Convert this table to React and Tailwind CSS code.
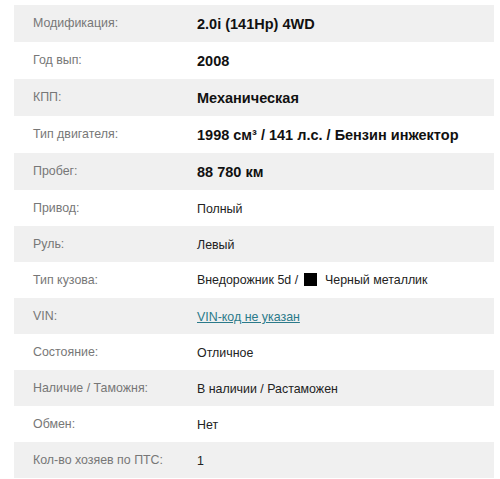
import React from "react";

const rows = [
  { label: "Модификация:", value: "2.0i (141Hp) 4WD", bold: true },
  { label: "Год вып:", value: "2008", bold: true },
  { label: "КПП:", value: "Механическая", bold: true },
  { label: "Тип двигателя:", value: "1998 см³ / 141 л.с. / Бензин инжектор", bold: true },
  { label: "Пробег:", value: "88 780 км", bold: true },
  { label: "Привод:", value: "Полный" },
  { label: "Руль:", value: "Левый" },
  { label: "Тип кузова:", value: "body" },
  { label: "VIN:", value: "vin" },
  { label: "Состояние:", value: "Отличное" },
  { label: "Наличие / Таможня:", value: "В наличии / Растаможен" },
  { label: "Обмен:", value: "Нет" },
  { label: "Кол-во хозяев по ПТС:", value: "1" },
];

export default function App() {
  return (
    <div className="w-[500px] h-[479px] bg-white pt-[5px] pl-[14px] overflow-hidden" style={{ fontFamily: '"Liberation Sans", Arial, sans-serif' }}>
      <div className="w-[480px] flex flex-col">
        {rows.map((r, i) => {
          let val;
          if (r.value === "body") {
            val = (
              <span className="flex items-center text-[12.4px] text-[#222]">
                Внедорожник 5d /
                <span className="inline-block w-[13px] h-[13px] bg-black ml-[6px] mr-[8px]" />
                Черный металлик
              </span>
            );
          } else if (r.value === "vin") {
            val = <a href="#" className="text-[12.4px] text-[#2b7a8a] underline">VIN-код не указан</a>;
          } else if (r.bold) {
            val = <span className="text-[14.5px] font-bold text-[#111]">{r.value}</span>;
          } else {
            val = <span className="text-[12.4px] text-[#222]">{r.value}</span>;
          }
          return (
            <div
              key={i}
              className={`flex items-center ${r.bold ? "h-[37px]" : "h-[36px]"} ${i % 2 === 0 ? "bg-[#f0f0f0]" : "bg-white"}`}
            >
              <div className="w-[183px] pl-[19px] text-[12.4px] text-[#777]">{r.label}</div>
              <div>{val}</div>
            </div>
          );
        })}
      </div>
    </div>
  );
}
